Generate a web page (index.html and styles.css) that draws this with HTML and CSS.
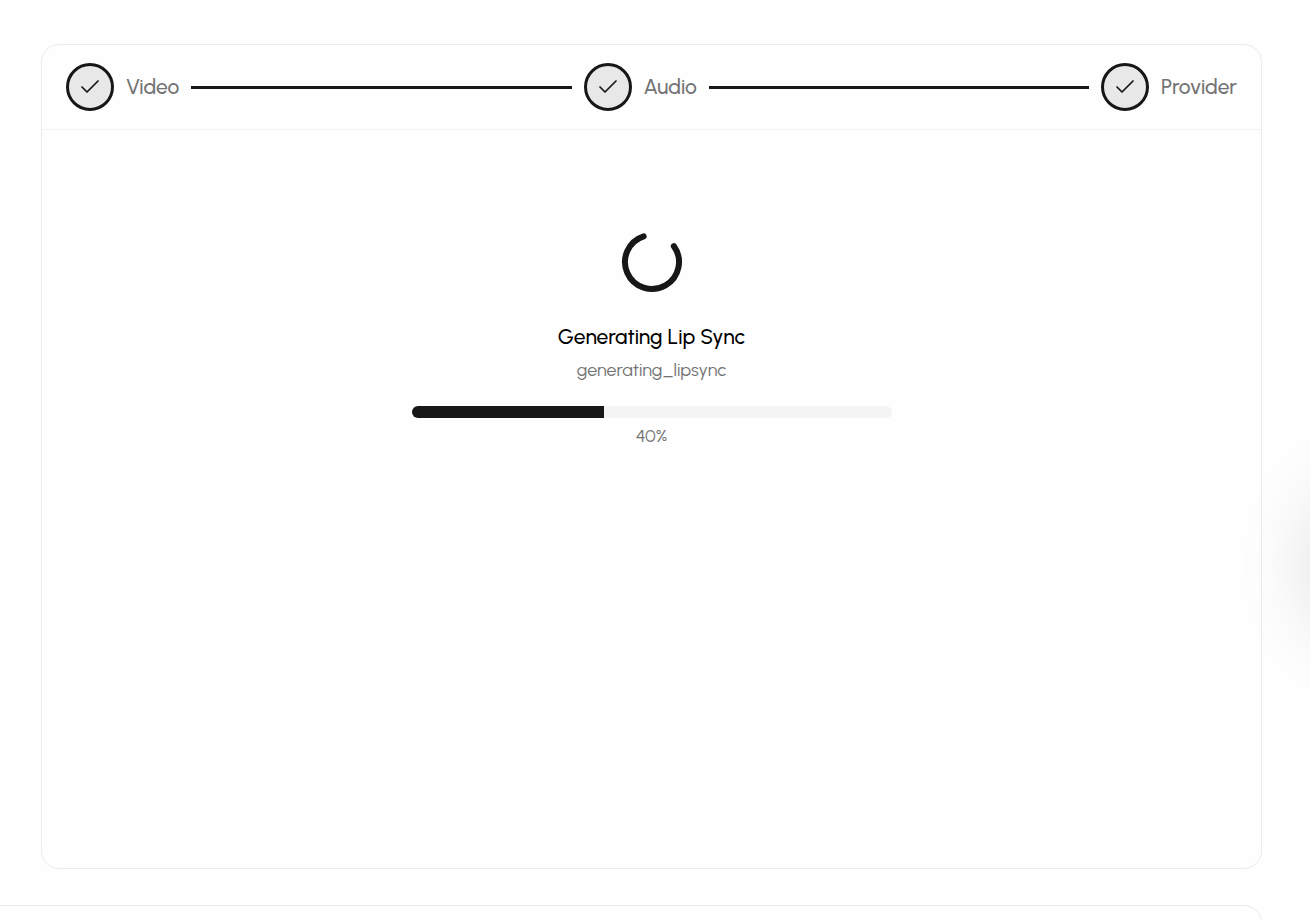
FILE: index.html
```html
<!DOCTYPE html>
<html lang="en">
<head>
    <meta charset="UTF-8">
    <meta name="viewport" content="width=device-width, initial-scale=1">
    <title>Generating Lip Sync</title>
    <link rel="stylesheet" href="styles.css">
</head>
<body>

    <main class="card">
        <ol class="steps">
            <li class="step">
                <span class="step-circle">
                    <svg viewBox="0 0 24 24" aria-hidden="true"><path d="M4 12l5 5L20 6"/></svg>
                </span>
                <span class="step-label">Video</span>
            </li>
            <li class="step-line" role="presentation"></li>
            <li class="step">
                <span class="step-circle">
                    <svg viewBox="0 0 24 24" aria-hidden="true"><path d="M4 12l5 5L20 6"/></svg>
                </span>
                <span class="step-label">Audio</span>
            </li>
            <li class="step-line" role="presentation"></li>
            <li class="step">
                <span class="step-circle">
                    <svg viewBox="0 0 24 24" aria-hidden="true"><path d="M4 12l5 5L20 6"/></svg>
                </span>
                <span class="step-label">Provider</span>
            </li>
        </ol>

        <section class="status">
            <svg class="spinner" viewBox="0 0 24 24" aria-hidden="true">
                <path d="M21 12a9 9 0 1 1-6.219-8.56" transform="rotate(-36 12 12)"/>
            </svg>
            <h1 class="status-title">Generating Lip Sync</h1>
            <p class="status-text">generating_lipsync</p>
            <div class="progress" role="progressbar" aria-label="Generating Lip Sync" aria-valuenow="40" aria-valuemin="0" aria-valuemax="100">
                <div class="progress-fill" style="width: 40%"></div>
            </div>
            <p class="status-percent">40%</p>
        </section>
    </main>

    <section class="next-card"></section>

    <div class="side-glow"></div>

</body>
</html>
```
FILE: styles.css
```css
* {
    box-sizing: border-box;
}
html {
    height: 100%;
}
body {
    display: flex;
    flex-direction: column;
    gap: 36px;
    min-height: 100%;
    margin: 0;
    padding: 44px 48px 0 41px;
    background: #fefefe;
    color: #0a0a0a;
    font-family: Urbanist, Lato, sans-serif;
    overflow: hidden;
}
.card {
    flex: 1;
    display: flex;
    flex-direction: column;
    border: 1px solid #ebebeb;
    border-radius: 18px;
}
.steps {
    display: flex;
    align-items: center;
    gap: 12px;
    margin: 0;
    padding: 18px 24px;
    border-bottom: 1px solid #f3f3f3;
    list-style: none;
}
.step {
    display: flex;
    align-items: center;
    gap: 12px;
}
.step-circle {
    display: flex;
    align-items: center;
    justify-content: center;
    width: 48px;
    height: 48px;
    border: 3px solid #171717;
    border-radius: 50%;
    background: #e8e8e8;
}
.step-circle svg {
    width: 24px;
    height: 24px;
    fill: none;
    stroke: #171717;
    stroke-width: 1.75;
    stroke-linecap: round;
    stroke-linejoin: round;
}
.step-label {
    color: #737373;
    font-size: 21px;
    font-weight: 500;
    line-height: 30px;
}
.step-line {
    flex: 1;
    height: 3px;
    background: #171717;
}
.status {
    display: flex;
    flex-direction: column;
    align-items: center;
    padding: 96px 24px;
    text-align: center;
}
.spinner {
    width: 72px;
    height: 72px;
    margin-bottom: 24px;
    fill: none;
    stroke: #171717;
    stroke-width: 2;
    stroke-linecap: round;
    stroke-linejoin: round;
}
.status-title {
    margin: 0 0 6px;
    color: #000;
    font-size: 21px;
    font-weight: 500;
    line-height: 30px;
}
.status-text,
.status-percent {
    margin: 0;
    color: #737373;
    font-size: 18px;
    line-height: 24px;
}
.progress {
    width: 100%;
    max-width: 480px;
    height: 12px;
    margin: 24px 0 6px;
    border-radius: 6px;
    background: #f4f4f4;
    overflow: hidden;
}
.progress-fill {
    height: 100%;
    background: #171717;
}
.next-card {
    flex-shrink: 0;
    height: 60px;
    margin: 0 0 -45px -65px;
    border: 1px solid #ebebeb;
    border-radius: 18px;
}
/* soft shadow of the panel docked past the right edge */
.side-glow {
    position: fixed;
    top: 480px;
    left: 100%;
    width: 170px;
    height: 170px;
    border-radius: 50%;
    box-shadow: 0 0 80px rgba(0, 0, 0, 0.13);
}
```
